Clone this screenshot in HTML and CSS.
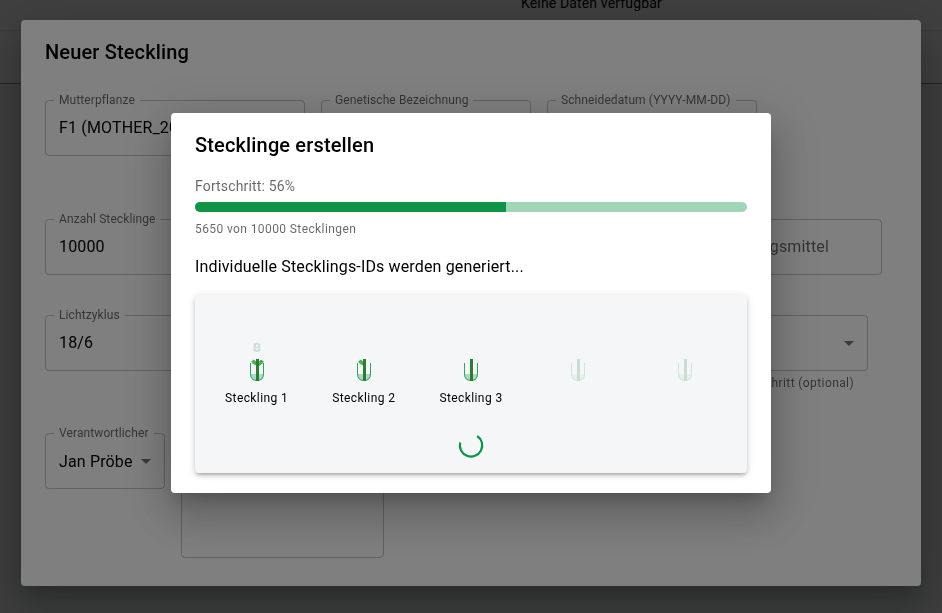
FILE: index.html
```html
<!DOCTYPE html>
<html lang="de">
<head>
<meta charset="utf-8">
<title>Neuer Steckling</title>
<link rel="stylesheet" href="styles.css">
</head>
<body>
<div class="page">
  <div class="empty">Keine Daten verfügbar</div>
  <div class="footer"></div>
  <div class="canvas"></div>
</div>

<div class="overlay">
  <section class="dialog form-dialog">
    <h2 class="title">Neuer Steckling</h2>
    <div class="row row-plant">
      <fieldset class="field"><legend>Mutterpflanze</legend><div class="value">F1 (MOTHER_20</div></fieldset>
      <fieldset class="field"><legend>Genetische Bezeichnung</legend></fieldset>
      <fieldset class="field"><legend>Schneidedatum (YYYY-MM-DD)</legend></fieldset>
    </div>
    <div class="row row-amount">
      <fieldset class="field"><legend>Anzahl Stecklinge</legend><div class="value">10000</div></fieldset>
      <fieldset class="field plain"><div class="value placeholder">Bewurzelungsmittel</div></fieldset>
    </div>
    <div class="row row-light">
      <fieldset class="field"><legend>Lichtzyklus</legend><div class="value">18/6</div></fieldset>
      <div class="with-help">
        <fieldset class="field plain"><svg class="arrow" viewBox="0 0 24 24"><path d="M7 10l5 5 5-5z"/></svg></fieldset>
        <p class="help">Nächster Schritt (optional)</p>
      </div>
    </div>
    <div class="row row-owner">
      <fieldset class="field owner"><legend>Verantwortlicher</legend><div class="value">Jan Pröbe</div><svg class="arrow" viewBox="0 0 24 24"><path d="M7 10l5 5 5-5z"/></svg></fieldset>
      <fieldset class="field plain notes"></fieldset>
    </div>
  </section>
</div>

<div class="overlay">
  <section class="dialog progress-dialog">
    <h2 class="title">Stecklinge erstellen</h2>
    <p class="progress-label">Fortschritt: 56%</p>
    <div class="bar"><div class="bar-fill" style="width:56.3%"></div></div>
    <p class="count">5650 von 10000 Stecklingen</p>
    <p class="status">Individuelle Stecklings-IDs werden generiert...</p>
    <div class="panel">
      <div class="plants">
        <div class="plant">
          <svg class="sprout" viewBox="0 0 20 40"><use href="#pot"/><use href="#leaf-left"/><use href="#leaf-right"/><use href="#stem"/>
            <path class="flower" fill-rule="evenodd" d="M8.2 2.4Q10 1.3 11.8 2.4L13.5 2.6 13.1 4.3 13.7 6 12 7.3H8L6.3 6 6.9 4.3 6.5 2.6ZM10 3.4a1.3 1.3 0 1 0 0 2.6a1.3 1.3 0 1 0 0-2.6Z M6 7.6Q8.5 7.4 10 9.4 11.5 7.4 14 7.6 13.6 11 10 11 6.4 11 6 7.6Z"/></svg>
          <span>Steckling 1</span>
        </div>
        <div class="plant">
          <svg class="sprout" viewBox="0 0 20 40"><use href="#pot"/><use href="#leaf-left"/><use href="#stem"/></svg>
          <span>Steckling 2</span>
        </div>
        <div class="plant">
          <svg class="sprout" viewBox="0 0 20 40"><use href="#pot"/><use href="#stem"/></svg>
          <span>Steckling 3</span>
        </div>
        <div class="plant"><svg class="sprout pending" viewBox="0 0 20 40"><use href="#pot"/><use href="#stem"/></svg></div>
        <div class="plant"><svg class="sprout pending" viewBox="0 0 20 40"><use href="#pot"/><use href="#stem"/></svg></div>
      </div>
      <svg class="spinner" viewBox="0 0 24 24"><path d="M18.2 2A11.2 11.2 0 1 1 1.2 8.5"/></svg>
    </div>
  </section>
</div>

<svg class="defs">
  <defs>
    <g id="pot">
      <path d="M3.5 33H16.5Q16 39.5 10 39.5T3.5 33Z" fill="#0e9347" fill-opacity=".3"/>
      <path d="M3.5 22V33Q3.5 39.5 10 39.5T16.5 33V22" fill="none" stroke="#0e9347" stroke-opacity=".85"/>
    </g>
    <path id="leaf-left" d="M4 20.5L5.5 20 5.5 18.8 7.5 19 12 23.5V26L9 24.5 5.5 22.5Z" fill="#4caf50"/>
    <path id="leaf-right" d="M17 20.5L15.5 20 15.5 18.8 13.5 19 9 23.5V26L12 25 15.5 22.5Z" fill="#4caf50"/>
    <path id="stem" d="M9 18h3v22H9z" fill="#2e7d32"/>
  </defs>
</svg>
</body>
</html>
```

FILE: styles.css
```css
* { box-sizing: border-box; }
body {
  margin: 0;
  height: 613px;
  overflow: hidden;
  font-family: Roboto, sans-serif;
  color: #000;
}
h2, p { margin: 0; }
.page { height: 613px; background: #fff; }
.empty {
  height: 31px;
  padding-left: 521px;
  border-bottom: 1px solid #e0e0e0;
  font-size: 14px;
  line-height: 7px;
  letter-spacing: .15px;
}
.footer { height: 53px; border-bottom: 1px solid #888; }
.canvas { height: 529px; background: #f1f6f3; }

.overlay {
  position: fixed;
  inset: 0;
  display: flex;
  justify-content: center;
  align-items: center;
  background: rgba(0, 0, 0, .5);
}
.dialog {
  background: #fff;
  border-radius: 4px;
  box-shadow: 0 11px 15px -7px rgba(0, 0, 0, .2), 0 24px 38px 3px rgba(0, 0, 0, .14), 0 9px 46px 8px rgba(0, 0, 0, .12);
}
.title { padding: 16px 24px; font-size: 20px; font-weight: 500; line-height: 32px; letter-spacing: .15px; }

.form-dialog { width: 900px; height: 566px; margin-bottom: 7px; overflow: hidden; }
.row { display: grid; gap: 16px; margin-left: 24px; align-items: start; }
.row-plant { grid-template-columns: 260px 210px 210px; margin-top: 11px; height: 119px; }
.row-amount { grid-template-columns: 406px 415px; height: 96px; }
.row-light { grid-template-columns: 406px 401px; height: 118px; }
.row-owner { grid-template-columns: 120px 203px; }
.field {
  position: relative;
  min-width: 0;
  height: 61px;
  margin: 0;
  padding: 0 8px;
  border: 1px solid rgba(0, 0, 0, .23);
  border-radius: 4px;
}
.field legend {
  height: 11px;
  padding: 0 5px;
  font-size: 12px;
  line-height: 10px;
  letter-spacing: .1px;
  color: rgba(0, 0, 0, .6);
  white-space: nowrap;
}
.value { padding: 10px 5px; font-size: 16px; line-height: 24px; letter-spacing: .15px; white-space: nowrap; }
.owner .value { padding-top: 11px; }
.field.plain { height: 56px; margin-top: 5px; }
.plain .value { padding-top: 15px; }
.placeholder { margin-right: 39px; text-align: right; color: rgba(0, 0, 0, .6); }
.arrow { position: absolute; right: 6px; bottom: 15px; width: 24px; height: 24px; fill: rgba(0, 0, 0, .54); }
.help { margin: 2px 14px 0; font-size: 12px; line-height: 20px; letter-spacing: .4px; text-align: right; color: rgba(0, 0, 0, .6); }
.field.notes { height: 125px; }

.progress-dialog { width: 600px; height: 380px; margin-bottom: 7px; }
.progress-dialog > :not(.title) { margin-left: 24px; margin-right: 24px; }
.progress-label { margin-top: -1px; font-size: 14px; line-height: 20px; letter-spacing: .15px; color: rgba(0, 0, 0, .6); }
.bar { height: 10px; margin-top: 6px; border-radius: 5px; overflow: hidden; background: #a1d5b8; }
.bar-fill { height: 10px; background: #0e9347; }
.count { margin-top: 7px; font-size: 12px; line-height: 20px; letter-spacing: .4px; color: rgba(0, 0, 0, .6); }
.status { margin-top: 16px; font-size: 16px; line-height: 24px; letter-spacing: .15px; }
.panel {
  height: 178px;
  margin-top: 16px;
  padding: 32px 8px 0;
  border-radius: 4px;
  background: #f4f6f8;
  box-shadow: 0 3px 3px -2px rgba(0, 0, 0, .2), 0 3px 4px rgba(0, 0, 0, .14), 0 1px 8px rgba(0, 0, 0, .12);
}
.plants { display: grid; grid-template-columns: repeat(5, 1fr); height: 107px; padding-top: 14px; }
.plant { display: flex; flex-direction: column; align-items: center; font-size: 12px; line-height: 20px; letter-spacing: .4px; }
.plant span { margin-top: 7px; }
.sprout { width: 20px; height: 40px; }
.pending { opacity: .2; }
.flower { fill: #2e7d32; opacity: .2; }
.spinner { display: block; width: 24px; height: 24px; margin: 0 auto; overflow: visible; fill: none; stroke: #0e9347; stroke-width: 2.2; }
.defs { position: absolute; width: 0; height: 0; }
```
